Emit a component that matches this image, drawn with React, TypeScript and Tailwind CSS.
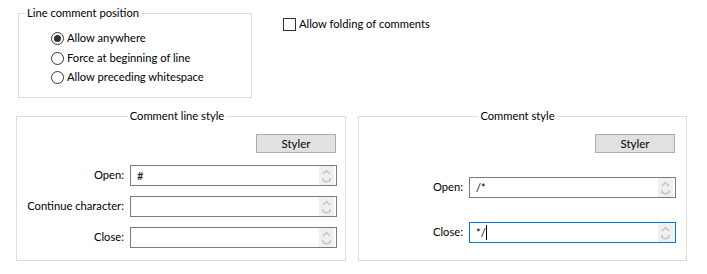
import React from 'react';

const FONT = 'Lato, "Liberation Sans", sans-serif';

const Spinner: React.FC = () => (
  <div className="ml-auto mr-[2px] h-full w-[15px] bg-[#f0f0f0] flex flex-col items-center justify-center gap-[2px]">
    <svg width="9" height="6" viewBox="0 0 9 6">
      <path d="M1 5 L4.5 1.5 L8 5" fill="none" stroke="#c4c4c4" strokeWidth="1.5" />
    </svg>
    <svg width="9" height="6" viewBox="0 0 9 6">
      <path d="M1 1 L1 3.5 L4.5 5 L8 3.5 L8 1" fill="none" stroke="#c4c4c4" strokeWidth="1.5" />
    </svg>
  </div>
);

interface FieldProps {
  label: string;
  value?: string;
  focused?: boolean;
}

const Field: React.FC<FieldProps> = ({ label, value = '', focused = false }) => (
  <div className="flex items-center justify-end gap-[6px] whitespace-nowrap">
    <span>{label}</span>
    <div
      className={`flex items-center h-[21px] w-[207px] border bg-white ${
        focused ? 'border-[#0078d7]' : 'border-[#7a7a7a]'
      }`}
    >
      <span className="pl-[6px] leading-none">{value}</span>
      {focused && <span className="w-px h-[15px] bg-black" />}
      <Spinner />
    </div>
  </div>
);

const Styler: React.FC = () => (
  <button className="w-[80px] h-[19px] bg-[#e1e1e1] border border-[#adadad] text-[11.5px] leading-none">
    Styler
  </button>
);

const Radio: React.FC<{ label: string; checked?: boolean }> = ({ label, checked }) => (
  <div className="flex items-center gap-[3px] h-[19.5px] whitespace-nowrap">
    <span className="w-[13px] h-[13px] rounded-full border border-[#333] flex items-center justify-center">
      {checked && <span className="w-[7px] h-[7px] rounded-full bg-[#333]" />}
    </span>
    <span>{label}</span>
  </div>
);

export default function App() {
  return (
    <div
      className="w-[707px] h-[274px] bg-white text-black text-[11.2px] overflow-hidden"
      style={{ fontFamily: FONT }}
    >
      {/* Top row */}
      <div className="flex items-start h-[103px]">
        <fieldset className="ml-[18px] mt-[5px] w-[234px] h-[93px] border border-[#dcdcdc]">
          <legend className="ml-[6px] px-[2px] leading-[16px]">Line comment position</legend>
          <div className="pl-[32px] pt-[8px]">
            <Radio label="Allow anywhere" checked />
            <Radio label="Force at beginning of line" />
            <Radio label="Allow preceding whitespace" />
          </div>
        </fieldset>
        <label className="ml-[31px] mt-[18px] flex items-center gap-[3px] h-[13px] whitespace-nowrap">
          <span className="w-[13px] h-[13px] border border-[#333] bg-white" />
          <span>Allow folding of comments</span>
        </label>
      </div>

      {/* Bottom row */}
      <div className="flex items-start pt-[5px]">
        <fieldset className="ml-[16px] w-[330px] h-[153px] border border-[#dcdcdc] pr-[8px]">
          <legend className="mx-auto px-[2px] leading-[16px]">Comment line style</legend>
          <div className="flex justify-end pt-[10px] pr-[1px]">
            <Styler />
          </div>
          <div className="flex flex-col gap-[10px] pt-[12px]">
            <Field label="Open:" value="#" />
            <Field label="Continue character:" />
            <Field label="Close:" />
          </div>
        </fieldset>
        <fieldset className="ml-[12px] w-[329px] h-[153px] border border-[#dcdcdc] pr-[10px]">
          <legend className="mx-auto px-[2px] leading-[16px]">Comment style</legend>
          <div className="flex justify-end pt-[10px] pr-[1px]">
            <Styler />
          </div>
          <div className="flex flex-col gap-[24px] pt-[24px]">
            <Field label="Open:" value="/*" />
            <Field label="Close:" value="*/" focused />
          </div>
        </fieldset>
      </div>
    </div>
  );
}
